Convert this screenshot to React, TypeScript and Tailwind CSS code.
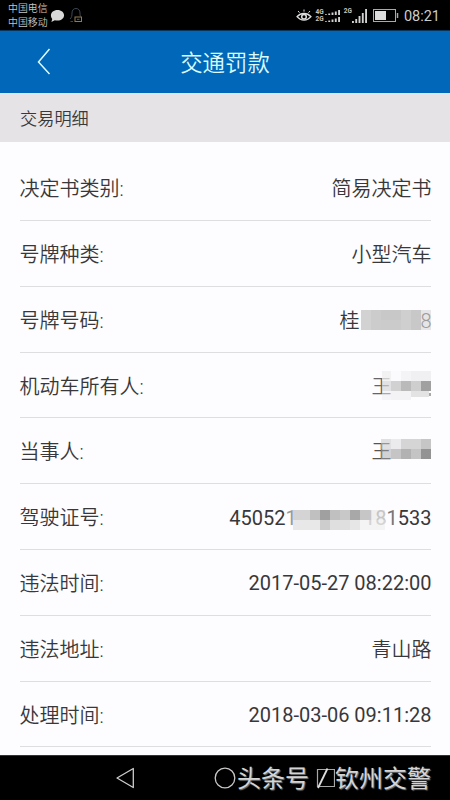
import * as React from "react";
import { clsx } from "clsx";

type Block = [x: number, y: number, w: number, h: number, color: string];

function Mosaic({ blocks, width }: { blocks: Block[]; width: number }) {
  return (
    <svg
      className="absolute top-0 right-0 h-[36px]"
      width={width}
      height={36}
      viewBox={`0 0 ${width} 36`}
      shapeRendering="crispEdges"
    >
      {blocks.map(([x, y, w, h, color], i) => (
        <rect key={i} x={x} y={y} width={w} height={h} fill={color} />
      ))}
    </svg>
  );
}

function Plate() {
  return (
    <span className="relative flex h-[36px] items-center">
      <span className="w-[81px]">桂</span>
      <span className="text-[#666]">8</span>
      <Mosaic
        width={73}
        blocks={[
          [2, 7, 10, 20, "#d2d2d3"],
          [12, 7, 10, 20, "#cccccd"],
          [22, 7, 20, 10, "#c8c8c9"],
          [22, 17, 20, 10, "#cbcbcc"],
          [42, 7, 10, 20, "#cfcfd0"],
          [52, 7, 10, 20, "#c8c8c9"],
          [62, 7, 10, 20, "#d0d0d180"],
        ]}
      />
    </span>
  );
}

function OwnerName() {
  return (
    <span className="relative flex h-[36px] w-[60px] items-center text-[#666]">
      <span className="w-[40px]">王</span>
      <Mosaic
        width={60}
        blocks={[
          [10, 2, 9, 10, "#eeeeefc0"],
          [19, 2, 10, 10, "#fbfafc"],
          [29, 2, 10, 10, "#f4f3f5"],
          [39, 2, 20, 10, "#f0eff1"],
          [10, 12, 9, 10, "#d5d5d6b0"],
          [19, 12, 10, 10, "#d1d1d2"],
          [29, 12, 10, 10, "#bababb"],
          [39, 12, 10, 10, "#cececf"],
          [49, 12, 10, 10, "#a0a0a1"],
          [10, 22, 9, 9, "#eeeeef80"],
          [19, 22, 20, 9, "#f3f2f4"],
          [39, 22, 18, 6, "#e3e3e4"],
          [57, 24, 2, 3, "#a8a8a9"],
        ]}
      />
    </span>
  );
}

function PartyName() {
  return (
    <span className="relative flex h-[36px] w-[60px] items-center text-[#555]">
      <span className="w-[40px]">王</span>
      <Mosaic
        width={60}
        blocks={[
          [9, 5, 10, 10, "#cacacb90"],
          [19, 5, 10, 10, "#ebeaec"],
          [29, 5, 20, 10, "#d5d5d6"],
          [49, 5, 10, 10, "#c6c6c7"],
          [9, 15, 10, 10, "#a8a8a980"],
          [19, 15, 10, 10, "#c5c5c6"],
          [29, 15, 10, 10, "#b2b2b3"],
          [39, 15, 10, 10, "#c4c4c5"],
          [49, 15, 10, 10, "#939394"],
        ]}
      />
    </span>
  );
}

function LicenseNumber() {
  return (
    <span className="relative flex h-[36px] items-center">
      <span>45052</span>
      <span className="w-[78.600px] text-[#999]">1</span>
      <span className="text-[#b0b0b0]">18</span>
      <span className="text-[#777]">1</span>
      <span>533</span>
      <Mosaic
        width={139}
        blocks={[
          [0, 10, 17, 10, "#d4d4d5"],
          [17, 10, 10, 10, "#c0c0c1"],
          [27, 10, 10, 10, "#a0a0a1"],
          [37, 10, 10, 10, "#c0c0c1"],
          [47, 10, 10, 10, "#c8c8c9"],
          [57, 10, 10, 10, "#a8a8a9"],
          [67, 10, 10, 10, "#c6c6c7"],
          [77, 10, 15, 10, "#dededf70"],
          [0, 20, 27, 10, "#e8e8e9"],
          [27, 20, 10, 10, "#cdcdce"],
          [37, 20, 20, 10, "#dfdfe0"],
          [57, 20, 10, 10, "#e6e6e7"],
          [67, 20, 25, 10, "#ededee90"],
        ]}
      />
    </span>
  );
}

const ROWS: { label: string; value: React.ReactNode; numeric?: boolean }[] = [
  { label: "决定书类别", value: "简易决定书" },
  { label: "号牌种类", value: "小型汽车" },
  { label: "号牌号码", value: <Plate /> },
  { label: "机动车所有人", value: <OwnerName /> },
  { label: "当事人", value: <PartyName /> },
  { label: "驾驶证号", value: <LicenseNumber />, numeric: true },
  { label: "违法时间", value: "2017-05-27 08:22:00", numeric: true },
  { label: "违法地址", value: "青山路" },
  { label: "处理时间", value: "2018-03-06 09:11:28", numeric: true },
];

function Signal({ className }: { className?: string }) {
  return (
    <svg viewBox="0 0 16 14" preserveAspectRatio="none" className={className} fill="#d2d2d2">
      <path d="M0 12h2v2H0zM3.500 10h2v4h-2zM7 7h2v7H7zM10.500 4h2v10h-2zM14 0h2v14h-2z" />
    </svg>
  );
}

function StatusBar() {
  return (
    <div className="flex h-[31px] items-start border-b border-[#08355c] bg-black text-[#c4c4c4]">
      <div className="ml-2 w-[40px] pt-[2px] text-[9.900px] leading-[14px] font-[350]">
        <div>中国电信</div>
        <div>中国移动</div>
      </div>
      <svg viewBox="0 0 16 14" className="mt-[8.500px] ml-[2px] h-[14px] w-[15px]">
        <path
          d="M8 .5c4 0 7 2.400 7 5.700s-3 5.700-7 5.700c-1 0-2-.1-2.900-.4L1.500 13.500l.9-3.400C1.400 9 1 7.700 1 6.200 1 2.900 4 .5 8 .5z"
          fill="#d8d8d8"
        />
      </svg>
      <svg viewBox="0 0 16 18" className="mt-[6px] ml-[3px] h-[18px] w-[16px]" fill="none">
        <path
          d="M5 15.500H2.500M2 13c1.700-1.500 2-3 2-6 0-2.800 1.500-4.500 4-4.500s4 1.700 4 4.500c0 1.500.1 2.500.4 3.500"
          stroke="#3c4855"
        />
        <rect x="7" y="11" width="6.500" height="4.500" stroke="#8f7c55" />
        <path d="M9 13.300h2.500" stroke="#5f6048" />
      </svg>
      <div className="ml-auto flex h-[31px] items-center">
        <svg viewBox="0 0 16 16" className="h-[16px] w-[16px]" fill="none" stroke="#ddd">
          <path d="M1 8.700c3.800-4.300 10.200-4.300 14 0-3.800 4.500-10.200 4.500-14 0z" strokeWidth="1.300" />
          <circle cx="8" cy="8.700" r="2.300" strokeWidth="1.500" />
          <path d="M3.500 4.700 2 3M8 3.600V1.500M12.500 4.700 14 3" />
        </svg>
        <div className="ml-[4px] flex flex-col text-[6.500px] leading-[7px] font-bold">
          <span className="flex items-center gap-[1px]">
            4G
            <Signal className="h-[5px] w-[15px]" />
          </span>
          <span className="flex items-center gap-[1px]">
            2G
            <Signal className="h-[5px] w-[15px]" />
          </span>
        </div>
        <span className="mb-[9px] ml-[4px] text-[6.500px] leading-[7px] font-bold">2G</span>
        <Signal className="h-[14px] w-[15px]" />
        <svg viewBox="0 0 26 13" className="ml-[6px] h-[13px] w-[26px]" fill="none">
          <rect x=".5" y=".5" width="22" height="12" stroke="#aaa" />
          <rect x="2" y="2" width="11" height="9" fill="#ddd" />
          <path d="M24.500 4v5" stroke="#aaa" strokeWidth="1.500" />
        </svg>
        <span className="mt-[2px] mr-[10px] ml-[5px] text-[14.500px] text-[#ccc]">08:21</span>
      </div>
    </div>
  );
}

function Header() {
  return (
    <header className="relative flex h-[62px] items-center justify-center bg-[#0167b8] pt-[3px] text-[#dcfbff]">
      <svg
        viewBox="0 0 14 28"
        className="absolute top-[16px] left-[37px] h-[28px] w-[14px]"
        fill="none"
        stroke="currentColor"
        strokeWidth="1.500"
      >
        <path d="M12.500 2 1.500 15l11 12" />
      </svg>
      <h1 className="text-[22.400px] font-[350]">交通罚款</h1>
    </header>
  );
}

function NavBar() {
  return (
    <nav className="relative flex h-[45px] items-center border-t border-[#333] bg-black">
      <svg viewBox="0 0 20 22" className="ml-[115px] h-[22px] w-[20px]" fill="none">
        <path d="M18.300 1.500v19L2 11z" stroke="#ccc" strokeWidth="1.300" strokeLinejoin="round" />
      </svg>
      <svg viewBox="0 0 22 22" className="ml-[79px] h-[22px] w-[22px]" fill="none">
        <circle cx="11" cy="11" r="9.800" stroke="#c8c8c8" strokeWidth="1.300" />
      </svg>
      <svg viewBox="0 0 20 22" className="absolute top-[11px] left-[315px] h-[22px] w-[20px]" fill="none">
        <path d="M2.500 2.500h17v17h-17z" stroke="#a8a8a8" strokeWidth="1.200" />
        <path d="M3 21 12.500 1.500" stroke="#ddd" strokeWidth="1.800" />
      </svg>
      <div className="flex pt-[2px] text-[24px] leading-[44px] whitespace-nowrap text-[#d4d4d4] [text-shadow:1px_1px_1px_#777]">
        <span className="ml-[1px] w-[98px]">头条号</span>
        <span>钦州交警</span>
      </div>
    </nav>
  );
}

export default function App() {
  return (
    <div className="flex h-[800px] w-[450px] flex-col overflow-hidden bg-[#fdfcfe] font-[Roboto,'Noto_Sans_CJK_SC',sans-serif] text-[#38383a]">
      <StatusBar />
      <Header />
      <div className="flex h-[49px] items-center bg-[#e5e3e6] px-5 pt-[4px] text-[17.200px] font-[350]">
        交易明细
      </div>
      <main className="flex-1 overflow-hidden px-[19.500px] pt-[13.300px]">
        {ROWS.map((row) => (
          <div
            key={row.label}
            className="flex h-[65.800px] items-center justify-between border-b border-[#dedde0] text-[20px] leading-[30px]"
          >
            <span className="pt-[3px] font-[350]">{row.label}:</span>
            <span className={clsx("-mr-[1px]", row.numeric ? "pt-[2px]" : "pt-[3px] font-[350]")}>
              {row.value}
            </span>
          </div>
        ))}
      </main>
      <NavBar />
    </div>
  );
}
